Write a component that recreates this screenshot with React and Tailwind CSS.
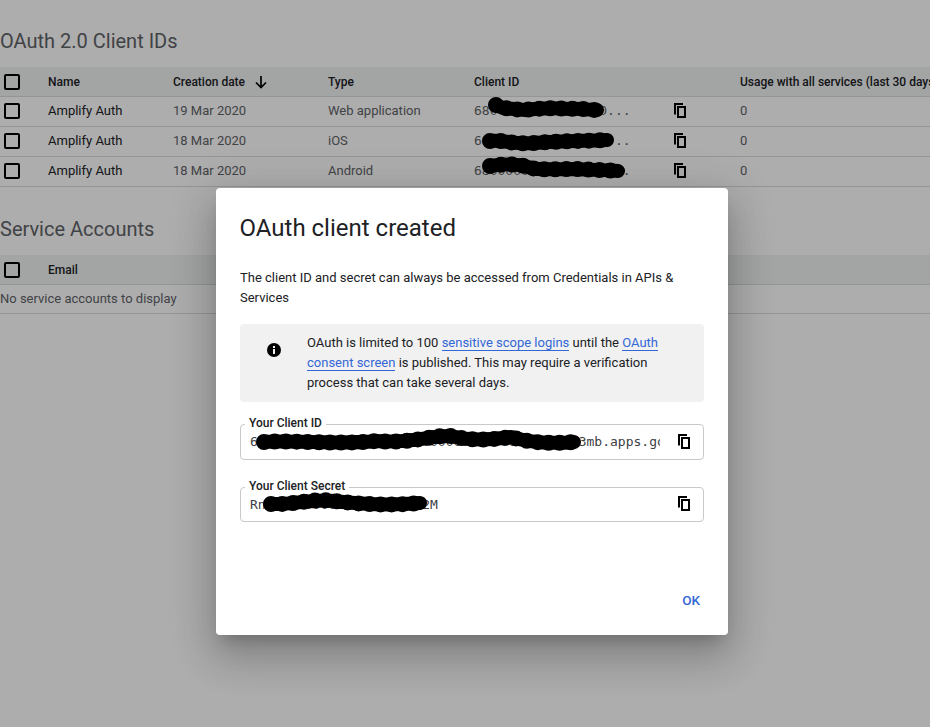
const roboto = { fontFamily: 'Roboto, sans-serif' };
const mono = { fontFamily: '"DejaVu Sans Mono", monospace' };

function CopyIcon({ className = '' }) {
  return (
    <svg width="12" height="15" viewBox="0 0 12 15" className={className} fill="#000">
      <path d="M0 0H9V2H2V11.5H0Z" />
      <path fillRule="evenodd" d="M3 3H12V15H3ZM5 5V13H10V5Z" />
    </svg>
  );
}

function Check({ className = '' }) {
  return <div className={`w-4 h-4 border-2 border-black rounded-[2px] box-border shrink-0 ml-1 ${className}`} />;
}

function Row({ name, date, type, id }) {
  return (
    <div className="flex items-center h-[30px] pb-[2px] border-b border-[#dadce0] text-[13px] w-[1100px] box-border">
      <div className="w-[48px] shrink-0 flex"><Check className="mt-[1px]" /></div>
      <div className="w-[125px] shrink-0 text-[#202124]">{name}</div>
      <div className="w-[155px] shrink-0 text-[#5f6368]">{date}</div>
      <div className="w-[146px] shrink-0 text-[#5f6368]">{type}</div>
      <div className="w-[266px] shrink-0 text-[#5f6368]" style={mono}>{id}</div>
      <div className="w-[66px] shrink-0 text-[#5f6368]"><span>0</span></div>
    </div>
  );
}

function Head({ children }) {
  return (
    <div className="flex items-center h-[30px] bg-[#f1f3f4] border-b border-[#dadce0] text-[12px] font-medium text-[#202124] w-[1100px] box-border">
      {children}
    </div>
  );
}

function Scribble({ d, width, className }) {
  return (
    <svg className={`absolute pointer-events-none ${className}`} width={width} height="30" fill="none" stroke="#000" strokeLinecap="round" strokeLinejoin="round">
      <path d={d} strokeWidth="14" />
      <path d={d} strokeWidth="16" strokeDasharray="0 11" />
    </svg>
  );
}

function Field({ label, value, h }) {
  return (
    <div className={`relative border border-[#c9c9c9] rounded-[4px] flex items-center justify-between pl-[9px] pr-[13px] ${h}`}>
      <span className="absolute -top-[9px] left-[4px] bg-white px-[4px] text-[12px] font-medium leading-[14px] text-[#202124]">{label}</span>
      <span className="w-[410px] overflow-hidden whitespace-nowrap text-[13px] text-[#3c4043]" style={mono}>{value}</span>
      <CopyIcon className="-mt-[2px]" />
    </div>
  );
}

export default function App() {
  return (
    <div className="relative w-[930px] h-[727px] overflow-hidden bg-white" style={roboto}>
      <div className="pt-[28px]">
        <h2 className="text-[20px] leading-[26px] text-[#5f6368] mb-[13px]">OAuth 2.0 Client IDs</h2>
        <Head>
          <div className="w-[48px] flex"><Check className="mt-[1px]" /></div>
          <div className="w-[125px]">Name</div>
          <div className="w-[155px] flex items-center gap-[9px]">
            Creation date
            <svg width="14" height="14" viewBox="0 0 14 14" fill="none" stroke="#000" strokeWidth="1.7"><path d="M7 1V12.5M2 7.5L7 12.5L12 7.5" /></svg>
          </div>
          <div className="w-[146px]">Type</div>
          <div className="w-[266px]">Client ID</div>
          <div>Usage with all services (last 30 days)</div>
        </Head>
        <div className="relative w-[1100px]">
          <Row name="Amplify Auth" date="19 Mar 2020" type="Web application" id="68000000000000000..." />
          <Row name="Amplify Auth" date="18 Mar 2020" type="iOS" id="68000000000000000..." />
          <Row name="Amplify Auth" date="18 Mar 2020" type="Android" id="68000000000000000..." />
          <CopyIcon className="absolute left-[674px] top-[6px]" />
          <CopyIcon className="absolute left-[674px] top-[36px]" />
          <CopyIcon className="absolute left-[674px] top-[66px]" />
        </div>
        <h2 className="text-[20px] leading-[26px] text-[#5f6368] mt-[29px] mb-[13px]">Service Accounts</h2>
        <Head>
          <div className="w-[48px] flex"><Check className="mt-[1px]" /></div>
          <div>Email</div>
        </Head>
        <div className="h-[29px] flex items-center border-b border-[#dadce0] text-[13px] text-[#5f6368]">No service accounts to display</div>
      </div>

      <Scribble width={150} className="left-[480px] top-[93px]" d="M16 12C20 15 30 16 45 17C60 15 75 15 90 16C100 15 108 17 117 17" />
      <Scribble width={150} className="left-[475px] top-[126px]" d="M15 15C25 13 40 19 60 17C85 15 110 15 132 14" />
      <Scribble width={160} className="left-[475px] top-[154px]" d="M15 12C25 10 40 10 50 12C60 17 80 15 100 15C120 16 130 16 143 17" />

      <div className="absolute inset-0 bg-black/[0.32]" />

      <div className="absolute left-[216px] top-[188px] w-[512px] h-[447px] bg-white rounded-[4px] shadow-[0_11px_15px_-7px_rgba(0,0,0,0.2),0_24px_38px_3px_rgba(0,0,0,0.14),0_9px_46px_8px_rgba(0,0,0,0.12)] px-6 pt-[24px] flex flex-col">
        <h1 className="text-[24px] leading-[32px] text-[#202124] -ml-[0.5px]">OAuth client created</h1>
        <p className="mt-[24px] text-[13px] leading-[20px] text-[#202124]">The client ID and secret can always be accessed from Credentials in APIs &amp; Services</p>
        <div className="mt-[16px] h-[78px] bg-[#f1f1f1] rounded-[4px] flex items-center text-[13px] leading-[20px] text-[#202124]">
          <div className="w-[67px] flex justify-center shrink-0">
            <svg width="14" height="14" viewBox="0 0 14 14" className="-mt-[20px]">
              <circle cx="7" cy="7" r="7" fill="#000" />
              <rect x="6" y="6" width="2" height="5" fill="#f1f1f1" />
              <rect x="6" y="3" width="2" height="2" fill="#f1f1f1" />
            </svg>
          </div>
          <div className="w-[370px] -mt-[1px]">
            OAuth is limited to 100 <a className="text-[#3367d6] border-b border-[#3367d6]">sensitive scope logins</a> until the <a className="text-[#3367d6] border-b border-[#3367d6]">OAuth consent screen</a> is published. This may require a verification process that can take several days.
          </div>
        </div>
        <div className="mt-[22px] flex flex-col gap-[27px]">
          <Field label="Your Client ID" h="h-[36px]" value="6000000000000000000000000000000000000000003mb.apps.googleusercontent.com" />
          <Field label="Your Client Secret" h="h-[35px]" value="Rn000000000000000000002M" />
        </div>
        <Scribble width={350} className="left-[30px] top-[239px]" d="M18 15C50 13 90 18 130 14C165 17 185 8 205 9C225 14 245 13 265 10C285 16 305 17 328 15" />
        <Scribble width={190} className="left-[38px] top-[302px]" d="M17 14C40 15 60 8 80 11C105 14 135 16 166 13" />
        <div className="absolute right-[28px] bottom-[25px] text-[#3367d6] text-[13.5px] font-medium">OK</div>
      </div>
    </div>
  );
}
